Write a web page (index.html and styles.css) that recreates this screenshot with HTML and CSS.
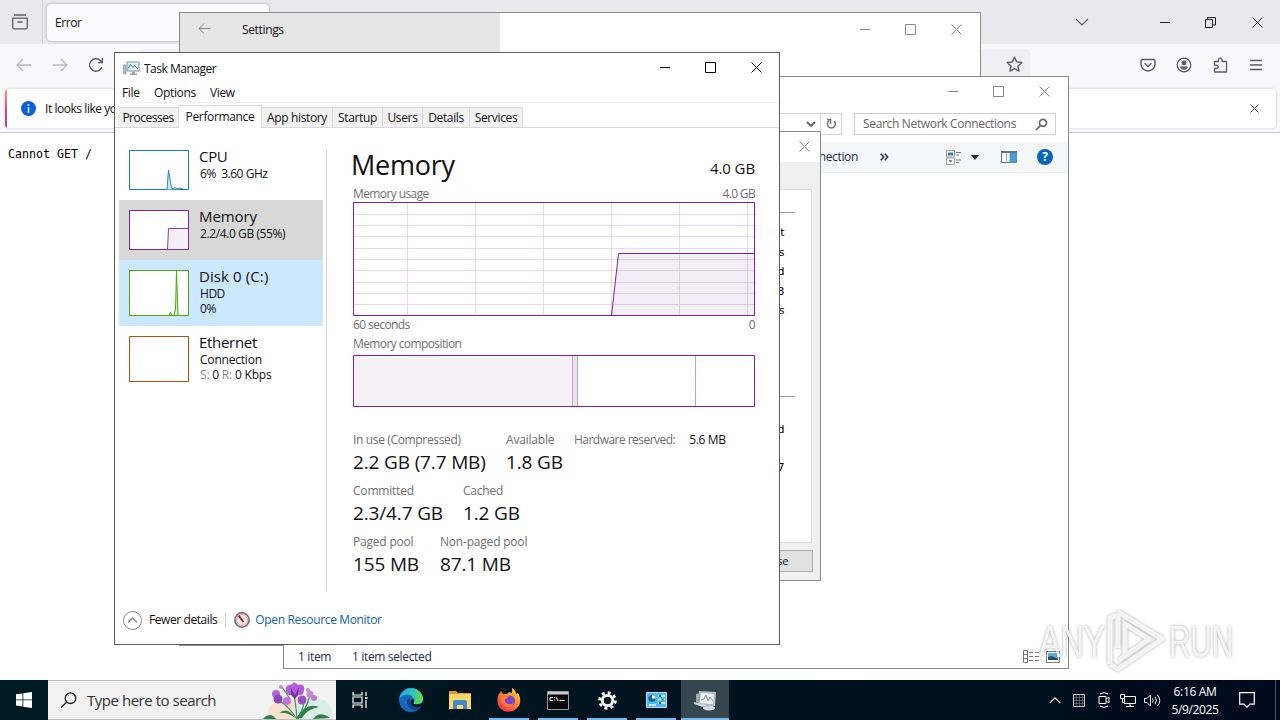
FILE: index.html
```html
<!DOCTYPE html>
<html lang="en">
<head>
<meta charset="utf-8">
<title>Desktop</title>
<link rel="stylesheet" href="styles.css">
</head>
<body>
<div class="desktop">

  <section class="browser">
    <div class="tabstrip">
      <div class="history"><svg width="18" height="18" viewBox="0 0 18 18" fill="none" stroke="#5b5b66" stroke-width="1.3"><path d="M3 2h12M1.7 5.2h14.6v9.1a1.5 1.5 0 0 1-1.5 1.5H3.200a1.500 1.500 0 0 1-1.500-1.500zM6.500 9h5"/></svg></div>
      <div class="tab">Error</div>
      <div class="strip-actions">
        <svg class="list-tabs" width="14" height="8" viewBox="0 0 14 8" fill="none" stroke="#5b5b66" stroke-width="1.200"><path d="M1 1l6 6 6-6"/></svg>
        <svg class="b-min" width="11" height="11" viewBox="0 0 11 11" stroke="#222"><path d="M0 5.500h10"/></svg>
        <svg class="b-max" width="11" height="11" viewBox="0 0 11 11" fill="none" stroke="#222"><path d="M.5 2.500h7v8h-7zM2.500 2.500v-2h8v7.500h-3"/></svg>
        <svg width="11" height="11" viewBox="0 0 11 11" stroke="#222"><path d="M.5.5l10 10M10.500.5l-10 10"/></svg>
      </div>
    </div>
    <div class="navbar">
      <svg class="nav-back" width="16" height="14" viewBox="0 0 16 14" fill="none" stroke="#b8b8be" stroke-width="1.300"><path d="M7 1L1 7l6 6M1 7h14"/></svg>
      <svg class="nav-fwd" width="16" height="14" viewBox="0 0 16 14" fill="none" stroke="#b8b8be" stroke-width="1.300"><path d="M9 1l6 6-6 6M15 7H1"/></svg>
      <svg class="nav-reload" width="16" height="16" viewBox="0 0 16 16" fill="none" stroke="#5b5b66" stroke-width="1.400"><path d="M13.800 10.200A6.300 6.300 0 1 1 12.500 3.700L14 5.200M14.300 1v4.600H9.700"/></svg>
      <div class="urlbar"><svg width="17" height="17" viewBox="0 0 17 17" fill="none" stroke="#5b5b66" stroke-width="1.400" stroke-linejoin="round"><path d="M8.500 1.200l2.200 4.700 5.100.6-3.800 3.500 1 5.100-4.500-2.500L4 15.100l1-5.100L1.200 6.500l5.100-.6z"/></svg></div>
      <div class="nav-icons">
        <svg width="16" height="16" viewBox="0 0 16 16" fill="none" stroke="#5b5b66" stroke-width="1.400"><path d="M2.500 2.500h11a1.500 1.500 0 0 1 1.500 1.500v3.500a7 6.500 0 0 1-14 0V4a1.500 1.500 0 0 1 1.500-1.500zM4.500 6.300L8 9.500l3.500-3.200"/></svg>
        <svg width="16" height="16" viewBox="0 0 16 16"><circle cx="8" cy="8" r="6.800" fill="none" stroke="#5b5b66" stroke-width="1.300"/><circle cx="8" cy="6" r="2.400" fill="#5b5b66"/><path d="M3.800 9.500h8.400c-.5 2-2 3.200-4.200 3.200s-3.700-1.200-4.200-3.200z" fill="#5b5b66"/></svg>
        <svg width="16" height="16" viewBox="0 0 16 16" fill="none" stroke="#5b5b66" stroke-width="1.300" stroke-linejoin="round"><path d="M2.500 4.500h4V3a1.800 1.800 0 0 1 3.600 0v1.500h4.400V15h-12v-3.500h2a1.700 1.700 0 0 0 0-3.400h-2z"/></svg>
        <svg width="16" height="16" viewBox="0 0 16 16" stroke="#5b5b66" stroke-width="1.400"><path d="M2 3.500h12M2 8h12M2 12.500h12"/></svg>
      </div>
    </div>
    <div class="notice-row">
      <div class="notice">
        <span class="notice-edge"></span>
        <svg width="15" height="15" viewBox="0 0 15 15"><circle cx="7.500" cy="7.500" r="7.500" fill="#0a5fdc"/><path d="M7.500 3v1.700M7.500 6.200V12" stroke="#fff" stroke-width="1.500"/></svg>
        <span class="notice-text">It looks like you</span>
        <svg class="notice-x" width="9" height="9" viewBox="0 0 9 9" stroke="#444"><path d="M.5.5l8 8M8.500.5l-8 8"/></svg>
      </div>
    </div>
    <pre class="page">Cannot GET /</pre>
  </section>

  <section class="window settings">
    <div class="settings-pane">
      <svg width="13" height="11" viewBox="0 0 13 11" fill="none" stroke="#888"><path d="M6 .5l-5 5 5 5M1 5.500h11.500"/></svg>
      <span>Settings</span>
    </div>
    <div class="controls muted">
      <svg width="11" height="11" viewBox="0 0 11 11"><path d="M1 5.500h10"/></svg>
      <svg width="11" height="11" viewBox="0 0 11 11"><path d="M.5.5h10v10H.5z"/></svg>
      <svg width="11" height="11" viewBox="0 0 11 11"><path d="M.5.5l10 10M10.500.5l-10 10"/></svg>
    </div>
  </section>

  <section class="window network">
    <div class="controls muted">
      <svg width="11" height="11" viewBox="0 0 11 11"><path d="M1 5.500h10"/></svg>
      <svg width="11" height="11" viewBox="0 0 11 11"><path d="M.5.5h10v10H.5z"/></svg>
      <svg width="11" height="11" viewBox="0 0 11 11"><path d="M.5.5l10 10M10.500.5l-10 10"/></svg>
    </div>
    <div class="address-row">
      <div class="address">
        <svg width="10" height="7" viewBox="0 0 10 7" fill="none" stroke="#666" stroke-width="1.800"><path d="M1 1l4 4 4-4"/></svg>
        <span class="refresh"><svg width="11" height="12" viewBox="0 0 11 12" fill="none" stroke="#777" stroke-width="1.600"><path d="M2.800 3A4 4 0 1 0 8 3M1 1.800h3.500v4"/></svg></span>
      </div>
      <div class="search"><span>Search Network Connections</span><svg width="13" height="13" viewBox="0 0 13 13" fill="none" stroke="#666" stroke-width="1.700"><circle cx="8" cy="4.800" r="3.500"/><path d="M5.600 7.300L1 12"/></svg></div>
    </div>
    <div class="commands">
      <span>connection</span>
      <svg class="more" width="9" height="8" viewBox="0 0 9 8" fill="none" stroke="#222b45" stroke-width="1.400"><path d="M.7.7L3.700 4l-3 3.300M4.700.7L7.700 4l-3 3.300"/></svg>
      <svg class="view-mode" width="16" height="15" viewBox="0 0 16 15" fill="none"><path d="M.5.5h8v6.500h-8zM.5 8h8v6.500h-8z" fill="#fff" stroke="#9ca3a8"/><path d="M2 2.500h5v3H2z" fill="#3c82b8"/><path d="M2.500 10l2 3 2-3z" fill="#7a8750"/><path d="M10 2.500h5M10 5h3M10 10h5M10 12.500h3" stroke="#777"/></svg>
      <svg class="caret" width="8" height="5" viewBox="0 0 8 5"><path d="M0 0h8L4 5z" fill="#222b45"/></svg>
      <svg class="preview" width="16" height="12" viewBox="0 0 16 12"><path d="M.5.500h15v11H.5z" fill="#fff" stroke="#777"/><path d="M0 0h16v2H0z" fill="#667784"/><path d="M8.500 2h7v9.500h-7z" fill="#4a9ce0"/><path d="M5.500 2v9" stroke="#aaa"/></svg>
      <span class="help">?</span>
    </div>
    <div class="status">
      <span>1 item</span><span>1 item selected</span>
      <svg width="17" height="13" viewBox="0 0 17 13" fill="none" stroke="#777"><path d="M.5.500h4v12h-4zM.5 4.500h4M.5 8.500h4" /><path d="M6 2.500h4M12 2.500h4M6 6.500h4M12 6.500h4M6 10.500h4M12 10.500h4"/></svg>
      <svg width="14" height="12" viewBox="0 0 14 12"><path d="M.5.500h13v11H.5z" fill="#fff" stroke="#78828a"/><path d="M2 2h10v7H2z" fill="#62b0d8"/><path d="M2 6l4-1 6 3v1H2z" fill="#23506e"/></svg>
    </div>
  </section>

  <section class="window dialog">
    <div class="dialog-title"><svg width="11" height="11" viewBox="0 0 11 11" stroke="#888"><path d="M.5.500l10 10M10.500.5l-10 10"/></svg></div>
    <div class="dialog-body">
      <hr>
      <div class="letters"><span>t</span><span>s</span><span>d</span><span>3</span><span>s</span></div>
      <hr>
      <div class="letters second"><span>d</span><span>7</span></div>
    </div>
    <div class="dialog-foot"><span class="close-btn">Close</span></div>
  </section>

  <section class="window taskmgr">
    <header class="tm-title">
      <svg width="17" height="16" viewBox="0 0 17 16"><path d="M.5 5h2.500v9H.5z" fill="#b9c0c5" stroke="#8b9398" stroke-width=".7"/><path d="M4 2h12v9H4z" fill="#dff1fa" stroke="#8a9499"/><path d="M5 8.500l2.500-4 2.500 3 1.500-2 3.500 3.500" fill="none" stroke="#2487bd"/><path d="M9 11.500h3v2h2v1.500H7v-1.500h2z" fill="#9ba3a8"/></svg>
      <span>Task Manager</span>
      <div class="controls">
        <svg width="11" height="11" viewBox="0 0 11 11"><path d="M1 5.500h10"/></svg>
        <svg width="11" height="11" viewBox="0 0 11 11"><path d="M.5.5h10v10H.5z"/></svg>
        <svg width="11" height="11" viewBox="0 0 11 11"><path d="M.5.5l10 10M10.500.5l-10 10"/></svg>
      </div>
    </header>
    <nav class="tm-menu"><span class="m-file">File</span><span class="m-options">Options</span><span>View</span></nav>
    <div class="tm-tabs">
      <span class="t-proc">Processes</span><span class="t-perf active">Performance</span><span class="t-app">App history</span><span class="t-start">Startup</span><span class="t-users">Users</span><span class="t-details">Details</span><span class="t-serv">Services</span>
    </div>
    <div class="tm-main">
      <aside class="resources">
        <div class="res">
          <svg width="60" height="40" viewBox="0 0 60 40"><path d="M.5.500h59v39H.5z" fill="#fff" stroke="#1a7fb0"/><path d="M38 39.500L39.500 20l3 18 1.500 1 2-1.500 3 1.500 2-1 3 1" fill="#cfe6f2" stroke="#1a7fb0" stroke-width=".9"/></svg>
          <div><b>CPU</b><p class="s-cpu">6%&nbsp; 3.60 GHz</p></div>
        </div>
        <div class="res selected">
          <svg width="60" height="40" viewBox="0 0 60 40"><path d="M.5.500h59v39H.5z" fill="#fff" stroke="#8221a0"/><path d="M38.500 39.500l1-21h20v21z" fill="#f3eff5" stroke="#8221a0" stroke-width=".9"/></svg>
          <div><b class="s-mem">Memory</b><p class="s-memp">2.2/4.0 GB (55%)</p></div>
        </div>
        <div class="res tall hover">
          <svg width="60" height="46" viewBox="0 0 60 46"><path d="M.5.500h59v45H.5z" fill="#fff" stroke="#4da60c"/><path d="M40.500 45l1-3 1 3M45 45l1.500-6L47.500 1l1.500 44" fill="#ddeed0" stroke="#4da60c"/></svg>
          <div><b class="s-disk">Disk 0 (C:)</b><p>HDD</p><p>0%</p></div>
        </div>
        <div class="res tall">
          <svg width="60" height="46" viewBox="0 0 60 46"><path d="M.5.500h59v45H.5z" fill="#fff" stroke="#a0530f"/></svg>
          <div><b class="s-eth">Ethernet</b><p class="s-conn">Connection</p><p class="s-kbps"><i>S:</i> 0 <i>R:</i> 0 Kbps</p></div>
        </div>
      </aside>
      <main class="detail">
        <div class="head"><h1>Memory</h1><span>4.0 GB</span></div>
        <div class="cap"><span>Memory usage</span><span class="gb">4.0 GB</span></div>
        <svg class="chart" width="402" height="114" viewBox="0 0 402 114" fill="none">
          <path d="M54.500 1v112M122.500 1v112M190.500 1v112M258.500 1v112M326.500 1v112M394.500 1v112" stroke="#e5dae9"/>
          <path d="M1 12.500h400M1 23.500h400M1 34.500h400M1 46.500h400M1 57.500h400M1 68.500h400M1 80.500h400M1 91.500h400M1 102.500h400" stroke="#e5dae9"/>
          <path d="M258.500 113.500l7-62h136v62z" fill="#80559c" fill-opacity=".1" stroke="#8221a0"/>
          <path d="M.5.500h401v113H.5z" stroke="#8221a0"/>
        </svg>
        <div class="cap below"><span>60 seconds</span><span>0</span></div>
        <div class="cap comp-cap"><span>Memory composition</span></div>
        <svg class="chart" width="402" height="52" viewBox="0 0 402 52"><path d="M1 1h219v50H1z" fill="#f4f1f6"/><path d="M220 1h5v50h-5z" fill="#ecdff0"/><path d="M219.500 1v50M224.500 1v50M342.500 1v50" stroke="#bda5c6"/><path d="M.5.500h401v51H.5z" fill="none" stroke="#8221a0"/></svg>
        <div class="stats">
          <div class="stat-row"><div class="c1"><span class="k1">In use (Compressed)</span><strong>2.2 GB (7.7 MB)</strong></div><div class="c2"><span>Available</span><strong>1.8 GB</strong></div><div class="hw"><span class="k-hw">Hardware reserved:</span><em>5.6 MB</em></div></div>
          <div class="stat-row"><div class="c3"><span>Committed</span><strong>2.3/4.7 GB</strong></div><div><span>Cached</span><strong>1.2 GB</strong></div></div>
          <div class="stat-row"><div class="c4"><span>Paged pool</span><strong>155 MB</strong></div><div><span>Non-paged pool</span><strong>87.1 MB</strong></div></div>
        </div>
      </main>
    </div>
    <footer class="tm-foot">
      <svg width="19" height="19" viewBox="0 0 19 19" fill="none" stroke="#888"><circle cx="9.500" cy="9.500" r="9"/><path d="M5 11.500L9.500 7l4.500 4.500" stroke-width="1.300"/></svg>
      <span class="fewer">Fewer details</span>
      <i class="bar"></i>
      <svg class="gauge" width="16" height="16" viewBox="0 0 16 16"><circle cx="8" cy="8" r="7.200" fill="#f2eeee" stroke="#666" stroke-width="1.500"/><circle cx="8" cy="8" r="5.400" fill="none" stroke="#d7a1a1"/><path d="M4.500 3.500l5 6.500" stroke="#b01818" stroke-width="2"/></svg>
      <a>Open Resource Monitor</a>
    </footer>
  </section>

  <svg class="watermark" width="245" height="72" viewBox="0 0 245 72">
    <g fill="#fff" fill-opacity=".82" font-family="Liberation Sans, sans-serif" font-size="44">
      <text x="8" y="50" textLength="66" lengthAdjust="spacingAndGlyphs">ANY</text>
      <text x="138" y="50" textLength="64" lengthAdjust="spacingAndGlyphs">RUN</text>
    </g>
    <path d="M79 57V11l8-3v33M87 5l44 27-44 30-8-5M94 48V17l24 15-30 21" fill="none" stroke="#fff" stroke-opacity=".85" stroke-width="5" stroke-linejoin="round"/>
  </svg>

  <footer class="taskbar">
    <div class="start"><svg width="16" height="16" viewBox="0 0 16 16" fill="#fff"><path d="M0 2.300l6.500-.9v6.100H0zM7.300 1.300L16 0v7.500H7.300zM0 8.300h6.500v6.200L0 13.600zM7.300 8.300H16V16l-8.700-1.300z"/></svg></div>
    <div class="tsearch">
      <svg width="17" height="17" viewBox="0 0 17 17" fill="none" stroke="#222" stroke-width="1.300"><circle cx="10.500" cy="6.200" r="5.300"/><path d="M6.700 10L1 15.800"/></svg>
      <span>Type here to search</span>
      <svg class="flowers" width="75" height="38" viewBox="0 0 75 38">
        <ellipse cx="30" cy="31" rx="23" ry="13" fill="#f8e2cf"/><ellipse cx="52" cy="31" rx="19" ry="14" fill="#d8efe8"/>
        <path d="M36 38Q35 24 33 14M36 38Q28 26 19 20M37 38Q46 27 49 14M35 38Q44 28 42 20M21 6l8 12" fill="none" stroke="#4b8a57" stroke-width="1.200"/>
        <path d="M2 38q7-8 13 0zM34 37Q27 25 18 32q9-1 16 5zM36 37q9-16 22-11-12 2-17 11zM52 38q6-9 17-1z" fill="#2f8049"/>
        <path d="M25 10q-1-7 5-6 3-5 7 0 7-2 6 5 0 6-6 5l-3 3-3-3q-6 1-6-4z" fill="#b45bd9"/><path d="M30 7l4 7 4-8-1 8-3 4-4-4z" fill="#7134a5"/>
        <circle cx="15" cy="13" r="4" fill="#b564d9"/><circle cx="17" cy="18" r="4.500" fill="#8a45b8"/><circle cx="26" cy="20" r="4" fill="#c075dc"/><circle cx="41" cy="19" r="4.500" fill="#9850c5"/><circle cx="49" cy="13" r="3.500" fill="#c98ad5"/><circle cx="53" cy="17" r="3" fill="#bd78cb"/><circle cx="20" cy="6" r="2" fill="#c58ace"/><circle cx="47" cy="9" r="2" fill="#c58ace"/>
      </svg>
    </div>
    <div class="apps">
      <div class="view"><svg width="16" height="16" viewBox="0 0 16 16" fill="none" stroke="#fff" stroke-width="1.200"><path d="M1 0v3h9V0M1 16v-3h9v3M1 5h9v6H1zM14 0v4M14 8v8"/><path d="M13 5h2.500v2H13z" fill="#fff" stroke="none"/></svg></div>
      <div><svg width="24" height="24" viewBox="0 0 24 24"><defs><linearGradient id="eg" x1="0" y1="0" x2="1" y2=".3"><stop stop-color="#289fe0"/><stop offset=".55" stop-color="#2cc0c9"/><stop offset="1" stop-color="#65d653"/></linearGradient></defs><circle cx="12" cy="12" r="12" fill="#1769be"/><path d="M0 11C2 3 7 0 12 0c8 0 13 7 12 12-1 4-6 5-9 4-2-1 1-2 0-5C13 6 5 5 0 11z" fill="url(#eg)"/><path d="M8 12c-1 5 3 10 9 10l5-4c-5 3-14 1-11-8z" fill="#10418c"/><path d="M15 11c1 3-2 4 0 5 3 1 6 0 8-1l1 3-4 1c-5 1-10-2-8-7z" fill="#031820"/></svg></div>
      <div><svg width="22" height="20" viewBox="0 0 22 20"><path d="M0 1h7l2 2h13v4H0z" fill="#dd9b2b"/><path d="M0 4h22v15H0z" fill="#ffd566"/><path d="M4 19v-7q0-2 2-2h10q2 0 2 2v7h-4v-4H8v4z" fill="#3b8bd0"/></svg></div>
      <div class="running"><svg width="24" height="24" viewBox="0 0 24 24"><defs><linearGradient id="ff" x1="1" y1="0" x2=".2" y2="1"><stop stop-color="#fff13c"/><stop offset=".4" stop-color="#ff9a24"/><stop offset="1" stop-color="#f22858"/></linearGradient></defs><path d="M4 3l2 3 4 0 2-2 3 1V0c3 2 4 4 4 6l2-1c3 5 3 10 0 14-4 6-14 6-18 1C-1 15 0 7 3 5z" fill="url(#ff)"/><circle cx="12.500" cy="13" r="5.500" fill="#7a42d8"/><path d="M4 9c3-2 5 0 8-1-1 3-5 2-4 5 1 4 6 4 9 2-2 6-12 5-13-2z" fill="#ff7e29"/></svg></div>
      <div class="running"><svg width="22" height="19" viewBox="0 0 22 19"><path d="M.5.500h21v18H.5z" fill="#080808" stroke="#9a9a9a"/><path d="M1 1h20v2.500H1z" fill="#c9c9c9"/><path d="M3 6.500h3M3 6.500v3h3M7.500 6v1M7.500 8.500v1M9 6l2 4M12.500 9.500h5" stroke="#fff" fill="none"/></svg></div>
      <div class="running"><svg width="19" height="19" viewBox="0 0 19 19" fill="none" stroke="#fff"><circle cx="9.500" cy="9.500" r="5.200" stroke-width="2.800"/><circle cx="9.500" cy="9.500" r="7.900" stroke-width="2.700" stroke-dasharray="3.100 3.100"/></svg></div>
      <div class="running"><svg width="21" height="16" viewBox="0 0 21 16"><path d="M.5.500h20v15H.5z" fill="#54b9eb" stroke="#a8dcf6"/><circle cx="6" cy="6.500" r="3.600" fill="#17679e"/><path d="M6 6.500V3a3.500 3.500 0 0 1 3.500 3.500z" fill="#fff"/><path d="M3 13h7M12 4h7M12 7.500h7M12 11h7" stroke="#dff4ff" stroke-width="1.300"/><path d="M14 3v2M16.500 6.500v2M14 10v2" stroke="#14629b" stroke-width="2"/></svg></div>
      <div class="running current"><svg width="23" height="21" viewBox="0 0 23 21"><path d="M5 1l17 1-1 14-17-1z" fill="#b7bfc3"/><path d="M2 4l4-1v9l-4 1z" fill="#9ca6ac"/><path d="M7 3l13 1-1 10-13-1z" fill="#eef3f5"/><path d="M7 10l3-1 2-4 2 6 2-4 3 4" fill="none" stroke="#83929c"/><ellipse cx="15" cy="18" rx="6" ry="2.500" fill="#d5dadd"/><path d="M0 12l6 2 7 1-4 2-9-3z" fill="#d5dadd"/></svg></div>
    </div>
    <div class="tray">
      <svg width="12" height="7" viewBox="0 0 12 7" fill="none" stroke="#fff" stroke-width="1.200"><path d="M.7 6.200L6 .9l5.300 5.300"/></svg>
      <svg class="tr-grid" width="12" height="13" viewBox="0 0 12 13" fill="none"><path d="M.5.500h11v12H.5z" stroke="#ccc"/><path d="M3.500 1v11M6.500 1v11M9.500 1v11M1 3.500h10M1 6.500h10M1 9.500h10" stroke="#777" stroke-width=".7"/></svg>
      <svg class="tr-cam" width="12" height="16" viewBox="0 0 12 16" fill="none" stroke="#fff"><path d="M1 4.500h7v7H1zM8 7l3-2v6L8 9M2 2q4-3 8 0M2 14q4 3 8 0"/></svg>
      <svg class="tr-net" width="16" height="13" viewBox="0 0 16 13" fill="none" stroke="#fff"><path d="M4.500 2.500h11v7h-11zM10 9.500v3M6 12.500h8"/><path d="M.5.500h4v4h-4zM2.500 4.500v4h2" fill="#000c1c"/></svg>
      <svg class="tr-vol" width="17" height="13" viewBox="0 0 17 13" fill="none" stroke="#fff"><path d="M.5 4.500h2.500L6.500 1v11L3 8.500H.5zM8.500 4.500q1.500 2 0 4M11 2.800q3 3.700 0 7.400M13.500 1q4.500 5.500 0 11"/></svg>
      <div class="clock"><span>6:16 AM</span><span>5/9/2025</span></div>
      <svg class="tr-msg" width="16" height="16" viewBox="0 0 16 16" fill="none" stroke="#fff" stroke-width="1.200"><path d="M.7.700h14.600v11.500H11L8 15.200l-3-3H.7z"/></svg>
      <i></i>
    </div>
  </footer>
</div>
</body>
</html>
```
FILE: styles.css
```css
* { box-sizing: border-box; margin: 0; padding: 0; }
body { font: 12px/16px "Open Sans", "Noto Sans", sans-serif; letter-spacing: -0.35px; color: #111; overflow: hidden; }
svg { display: block; flex: none; }
i, em { font-style: normal; }
span, a { white-space: nowrap; }
.desktop { position: relative; width: 1280px; height: 720px; overflow: hidden; background: #fff; }

/* Browser */
.tabstrip { height: 44px; background: #eaeaee; display: flex; align-items: center; }
.history { width: 43px; height: 44px; padding: 13px 0 0 11px; border-right: 1px solid #cfcfd6; }
.tab { width: 222px; height: 37px; margin: 0 0 0 4px; padding: 0 8px; line-height: 38px; font-size: 12px; letter-spacing: -.45px; background: #fbfbfd; border-radius: 4px; box-shadow: 0 0 3px rgba(0,0,0,.35); }
.strip-actions { margin-left: auto; display: flex; align-items: center; padding-right: 17px; }
.list-tabs { margin-right: 71px; }
.b-min { margin-right: 34px; }
.b-max { margin-right: 36px; }
.navbar { height: 44px; background: #f9f9fb; display: flex; align-items: center; padding: 0 16px 3px; }
.nav-back { margin-right: 20px; }
.nav-fwd { margin-right: 20px; }
.urlbar { width: 890px; height: 32px; margin: 0 0 0 36px; padding-right: 7px; display: flex; align-items: center; justify-content: flex-end; background: #f0f0f4; border-radius: 4px; }
.nav-icons { margin-left: auto; display: flex; gap: 20px; }
.notice-row { height: 45px; background: #f9f9fb; padding: 1px 4px 0 5px; border-bottom: 1px solid #c8c8ce; }
.notice { height: 39px; background: #fff; border-radius: 4px; box-shadow: 0 0 3px rgba(0,0,0,.2); display: flex; align-items: center; padding-right: 17px; overflow: hidden; }
.notice-edge { width: 2px; height: 39px; margin-right: 14px; background: linear-gradient(#ff9a6b, #e04b8e, #8340c4); }
.notice-text { margin-left: 9px; letter-spacing: -.45px; }
.notice-x { margin-left: auto; }
.page { padding: 13px 8px; font: 11.630px/16px "DejaVu Sans Mono", monospace; letter-spacing: 0; color: #000; }

/* Windows */
.window { position: absolute; background: #fff; border: 1px solid #8a8a8a; }
.controls { display: flex; gap: 35px; }
.controls path { fill: none; stroke: #000; stroke-width: 1; }
.controls.muted path { stroke: #888; }

.settings { left: 179px; top: 12px; width: 802px; height: 634px; display: flex; justify-content: space-between; }
.settings-pane { width: 320px; background: #e6e6e6; display: flex; gap: 31px; padding: 9px 0 0 18px; }
.settings-pane svg { margin-top: 1px; }
.settings .controls { padding: 11px 18px 0 0; }

.network { left: 283px; top: 76px; width: 786px; height: 593px; display: flex; flex-direction: column; }
.network > .controls { justify-content: flex-end; padding: 9px 18px 0 0; height: 36px; }
.address-row { display: flex; justify-content: flex-end; gap: 12px; height: 22px; padding-right: 12px; margin-bottom: 7px; }
.address { width: 520px; border: 1px solid #d5d5d5; display: flex; justify-content: flex-end; align-items: center; gap: 4px; }
.refresh { width: 21px; height: 20px; border-left: 1px solid #d9d9d9; display: flex; align-items: center; justify-content: center; }
.search { width: 202px; border: 1px solid #d0d0d0; padding: 0 7px 0 8px; display: flex; align-items: center; justify-content: space-between; color: #666; letter-spacing: -.33px; }
.commands { height: 31px; background: #f5f6f7; border-bottom: 1px solid #e8edf0; display: flex; align-items: center; justify-content: flex-end; padding-right: 15px; color: #1e2b50; }
.more { margin: 0 57px 0 22px; }
.view-mode { margin-right: 9px; }
.caret { margin-right: 22px; }
.preview { margin-right: 20px; }
.help { width: 16px; height: 16px; border-radius: 8px; background: #0864be; color: #fff; font-weight: 700; text-align: center; letter-spacing: 0; }
.status { margin-top: auto; height: 23px; display: flex; align-items: center; padding: 0 8px 0 14px; gap: 21px; color: #1e2b50; }
.status svg:nth-of-type(1) { margin-left: auto; margin-right: -15px; }

.dialog { left: 460px; top: 131px; width: 361px; height: 450px; background: #f0f0f0; display: flex; flex-direction: column; }
.dialog-title { height: 30px; background: #fff; display: flex; justify-content: flex-end; padding: 9px 10px 0; }
.dialog-body { margin: 27px 8px 0; height: 354px; background: #fff; border: 1px solid #dcdcdc; padding: 22px 16px 0; }
.dialog-body hr { border: 0; height: 1px; background: #a0a0a0; }
.letters { height: 183px; padding: 10px 11px 0 0; display: flex; flex-direction: column; align-items: flex-end; font: 11px/19.500px "DejaVu Sans", sans-serif; color: #000; letter-spacing: -.5px; }
.letters.second { line-height: 38px; height: auto; padding-top: 14px; }
.dialog-foot { padding: 7px 7px 0; display: flex; justify-content: flex-end; }
.close-btn { width: 75px; height: 22px; border: 1px solid #adadad; background: #e1e1e1; padding-right: 24px; text-align: right; line-height: 20px; font-size: 11px; }

/* Task manager */
.taskmgr { left: 114px; top: 52px; width: 666px; height: 593px; border-color: #5b5b5b; display: flex; flex-direction: column; }
.tm-title { height: 30px; padding: 0 17px 0 8px; display: flex; align-items: center; gap: 4px; letter-spacing: -.5px; }
.tm-title span { padding-top: 1px; }
.tm-title .controls { margin: -1px 0 0 auto; }
.tm-menu { height: 20px; padding: 2px 0 0 7px; display: flex; border-bottom: 1px solid #f0f0f0; }
.m-file { width: 32px; }
.m-options { width: 56px; }
.tm-tabs { height: 25px; padding: 0 0 0 3px; display: flex; align-items: flex-end; border-bottom: 1px solid #d9d9d9; }
.tm-tabs span { height: 20px; line-height: 20px; text-align: center; background: #f2f2f2; border: 1px solid #d9d9d9; border-width: 1px 1px 0 0; }
.tm-tabs .active { height: 23px; line-height: 21px; margin-bottom: -1px; padding-bottom: 1px; background: #fff; }
.tm-tabs .t-proc { width: 61px; letter-spacing: -.5px; }
.t-perf { width: 83px; }
.t-app { width: 71px; }
.t-start { width: 50px; }
.t-users { width: 40px; }
.t-details { width: 47px; }
.tm-tabs .t-serv { width: 53px; }
.tm-main { display: flex; height: 465px; flex: none; }
.resources { width: 212px; height: 463px; padding: 12px 4px 0 4px; margin-right: 26px; background: linear-gradient(#d5d5d5, #d5d5d5) right bottom / 1px 441px no-repeat; }
.res { height: 60px; padding: 10px 10px 0; display: flex; gap: 10px; }
.res.tall { height: 66px; }
.selected { background: #d8d8d8; }
.hover { background: #cce8ff; }
.res b { display: block; font-weight: 400; font-size: 15px; line-height: 15px; margin: -1px 0 2px; letter-spacing: -.3px; }
.res .s-mem { letter-spacing: -.1px; }
.res .s-disk { letter-spacing: .1px; }
.res p { line-height: 15px; padding-left: 1px; letter-spacing: -.47px; white-space: nowrap; }
.res .s-memp { letter-spacing: -.4px; }
.res .s-conn { letter-spacing: -.2px; }
.res .s-kbps { letter-spacing: -.2px; }
.res i { color: #888; }
.detail { width: 402px; padding-top: 18px; }
.head { display: flex; justify-content: space-between; height: 38px; }
.head h1 { font-weight: 400; font-size: 27px; line-height: 38px; letter-spacing: -.25px; margin-left: -2px; }
.head span { font-size: 15px; line-height: 45px; letter-spacing: -.1px; }
.cap { display: flex; justify-content: space-between; color: #707070; height: 18px; line-height: 19px; letter-spacing: -.6px; }
.gb { letter-spacing: -.65px; }
.below, .comp-cap { height: 19px; line-height: 18px; }
.comp-cap { height: 20px; }
.stats { padding-top: 23px; }
.stat-row { display: flex; height: 51px; }
.stat-row span { display: block; color: #707070; line-height: 19px; height: 18px; letter-spacing: -.2px; }
.stat-row .k1 { letter-spacing: -.35px; }
.stat-row .k-hw { letter-spacing: -.53px; }
.stat-row strong { display: block; font-weight: 400; font-size: 19px; line-height: 28px; white-space: nowrap; letter-spacing: -.15px; }
.c1 { width: 153px; }
.c2 { width: 68px; }
.c3 { width: 110px; }
.c4 { width: 87px; }
.hw { display: flex; gap: 14px; line-height: 19px; white-space: nowrap; }
.tm-foot { display: flex; align-items: center; padding-left: 8px; height: 20px; margin-top: 17px; }
.fewer { margin-left: 7px; letter-spacing: -.42px; }
.bar { width: 1px; height: 14px; background: #ccc; margin: 0 8px; }
.tm-foot a { color: #1462b5; margin-left: 5px; }

.watermark { position: absolute; left: 1031px; top: 607px; filter: drop-shadow(0 0 1.500px rgba(0,0,0,.4)); }

/* Taskbar */
.taskbar { position: absolute; left: 0; top: 680px; width: 1280px; height: 40px; display: flex; background: linear-gradient(90deg, #001a22, #00121f 60%, #000a1c); }
.start { width: 48px; padding: 12px 0 0 16px; }
.tsearch { width: 288px; background: #f2f2f2; border: 1px solid #bdbdbd; border-width: 1px 0; display: flex; align-items: center; padding-left: 12px; color: #333; font-size: 15px; letter-spacing: -.47px; }
.tsearch span { margin-left: 10px; }
.flowers { margin-left: auto; }
.apps { display: flex; gap: 1px; }
.apps div { width: 48px; height: 40px; display: flex; align-items: center; justify-content: center; }
.apps .view { margin-right: 2px; }
.apps .running { border: solid #76b9ed; border-width: 0 0 2px; width: 40px; margin: 0 4px; padding-top: 2px; }
.apps .current { background: #37474f; width: 48px; margin: 0; }
.tray { margin-left: auto; display: flex; align-items: center; color: #fff; }
.tr-grid { margin-left: 12px; }
.tr-cam { margin-left: 13px; }
.tr-net { margin-left: 10px; }
.tr-vol { margin-left: 8px; }
.clock { width: 54px; margin-left: 7px; padding-top: 1px; display: flex; flex-direction: column; align-items: center; line-height: 18px; }
.tr-msg { margin-left: 17px; }
.tray i { width: 1px; height: 40px; background: #4b5561; margin: 0 4px 0 20px; }
```
